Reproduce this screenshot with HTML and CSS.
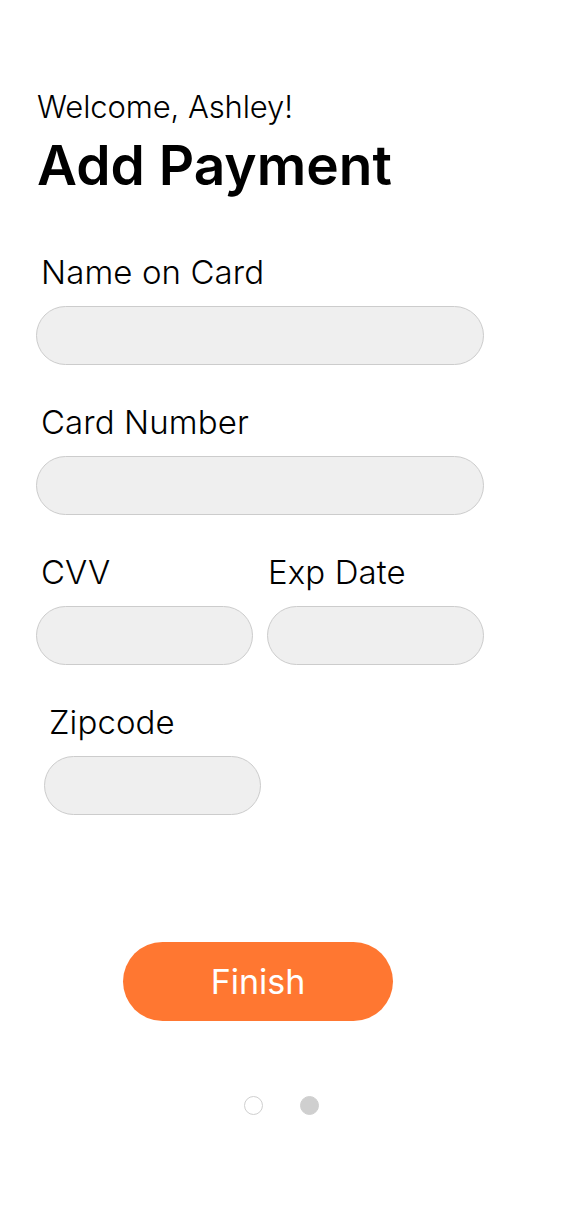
FILE: index.html
```html
<!DOCTYPE html>
<html lang="en">
<head>
<meta charset="utf-8">
<title>Add Payment</title>
<link rel="stylesheet" href="styles.css">
</head>
<body>
<main class="page">
  <header class="head">
    <p class="welcome">Welcome, Ashley!</p>
    <h1 class="title">Add Payment</h1>
  </header>
  <form class="form">
    <div class="field">
      <label class="label">Name on Card</label>
      <div class="input"></div>
    </div>
    <div class="field">
      <label class="label">Card Number</label>
      <div class="input"></div>
    </div>
    <div class="row">
      <div class="field half">
        <label class="label">CVV</label>
        <div class="input"></div>
      </div>
      <div class="field half">
        <label class="label flush">Exp Date</label>
        <div class="input"></div>
      </div>
    </div>
    <div class="field half zip">
      <label class="label">Zipcode</label>
      <div class="input"></div>
    </div>
    <div class="actions">
      <button type="button" class="finish">Finish</button>
    </div>
  </form>
  <div class="dots">
    <span class="dot"></span>
    <span class="dot active"></span>
  </div>
</main>
</body>
</html>
```

FILE: styles.css
```css
* { box-sizing: border-box; }
html, body { margin: 0; padding: 0; background: #fff; }
body {
  font-family: Inter, "Noto Sans", "Liberation Sans", sans-serif;
  color: #000;
  width: 563px;
}
.page {
  padding: 89px 0 0 36px;
}
.head { padding-left: 1px; }
.welcome {
  margin: 0;
  font-size: 31px;
  line-height: 36px;
  font-weight: 300;
  letter-spacing: -0.1px;
}
.title {
  margin: 8px 0 0;
  font-size: 55px;
  line-height: 64px;
  font-weight: 600;
  letter-spacing: 0;
}
.form {
  width: 448px;
  margin-top: 55px;
  display: flex;
  flex-direction: column;
}
.field {
  display: flex;
  flex-direction: column;
  gap: 14px;
  margin-bottom: 37px;
}
.label {
  padding-left: 5px;
  font-size: 33px;
  line-height: 40px;
  font-weight: 300;
  letter-spacing: 0.1px;
}
.label.flush { padding-left: 1px; }
.input {
  height: 59px;
  border-radius: 30px;
  background: #efefef;
  border: 1px solid #cccccc;
}
.row {
  display: flex;
  gap: 14px;
}
.half { width: 217px; }
.zip { margin-left: 8px; }
.actions {
  display: flex;
  justify-content: center;
  margin-top: 90px;
  padding-right: 4px;
}
.finish {
  width: 270px;
  height: 79px;
  border: none;
  border-radius: 40px;
  background: #ff7731;
  color: #fff;
  font-family: inherit;
  font-size: 34px;
  font-weight: 400;
  padding: 0;
}
.dots {
  display: flex;
  justify-content: center;
  gap: 37px;
  margin-top: 75px;
  margin-left: -36px;
}
.dot {
  width: 19px;
  height: 19px;
  border-radius: 50%;
  border: 1.5px solid #cfcfcf;
  background: #fff;
}
.dot.active {
  background: #cfcfcf;
}
```
